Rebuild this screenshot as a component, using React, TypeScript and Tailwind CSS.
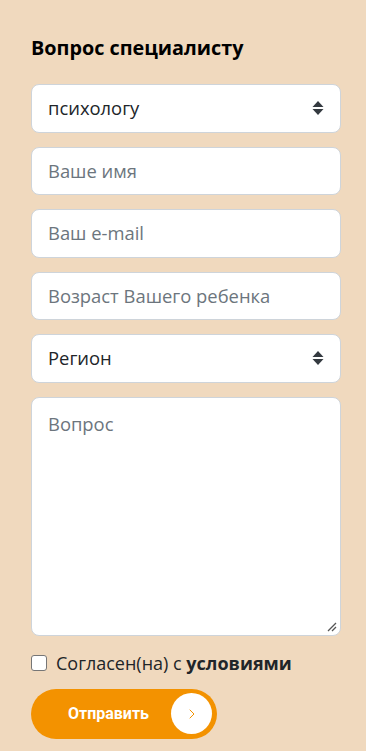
import { ChevronRight } from "lucide-react";

function SelectArrows() {
  return (
    <svg width="12" height="16" viewBox="0 0 12 16" className="text-[#343a40]">
      <path d="M6 1 L11.5 7 H0.5 Z" fill="currentColor" />
      <path d="M6 15 L11.5 9 H0.5 Z" fill="currentColor" />
    </svg>
  );
}

const field =
  "h-[48.5px] w-full rounded-[8px] border border-[#ced4da] bg-white px-[16px] flex items-center text-[18.4px]";

export default function App() {
  return (
    <div
      className="min-h-[751px] w-[366px] bg-[#f0d9be] px-[31px] pt-[34px]"
      style={{ fontFamily: '"Open Sans", "Noto Sans", sans-serif' }}
    >
      <h2 className="text-[19.8px] font-bold text-black leading-[28px] mb-[22px]">
        Вопрос специалисту
      </h2>
      <div className="flex flex-col gap-[14px] w-[310px]">
        <div className={`${field} justify-between text-[#212529]`}>
          <span>психологу</span>
          <SelectArrows />
        </div>
        <div className={`${field} text-[#6c757d]`}>Ваше имя</div>
        <div className={`${field} text-[#6c757d]`}>Ваш e-mail</div>
        <div className={`${field} text-[#6c757d]`}>Возраст Вашего ребенка</div>
        <div className={`${field} justify-between text-[#212529]`}>
          <span>Регион</span>
          <SelectArrows />
        </div>
        <div className="relative h-[239px] w-full rounded-[8px] border border-[#ced4da] bg-white px-[16px] pt-[12px] text-[18.4px] text-[#6c757d]">
          Вопрос
          <svg
            width="10"
            height="10"
            viewBox="0 0 10 10"
            className="absolute right-[3px] bottom-[3px]"
          >
            <path d="M1 9 L9 1 M5 9 L9 5" stroke="#555" strokeWidth="1.3" />
          </svg>
        </div>
      </div>
      <label className="mt-[14px] flex items-center gap-[9px] text-[18px] text-[#212529]">
        <span className="h-[16px] w-[16px] rounded-[3px] border border-[#767676] bg-white" />
        <span>
          Согласен(на) с <b className="font-bold">условиями</b>
        </span>
      </label>
      <button className="mt-[12px] flex h-[50px] w-[186px] items-center justify-between rounded-full bg-[#f39200] pl-[37px] pr-[5px]">
        <span className="text-[16px] font-bold text-white" style={{ fontFamily: "Roboto, sans-serif" }}>
          Отправить
        </span>
        <span className="flex h-[41px] w-[41px] items-center justify-center rounded-full bg-white">
          <ChevronRight size={16} strokeWidth={1.5} className="text-[#f39200]" />
        </span>
      </button>
    </div>
  );
}
